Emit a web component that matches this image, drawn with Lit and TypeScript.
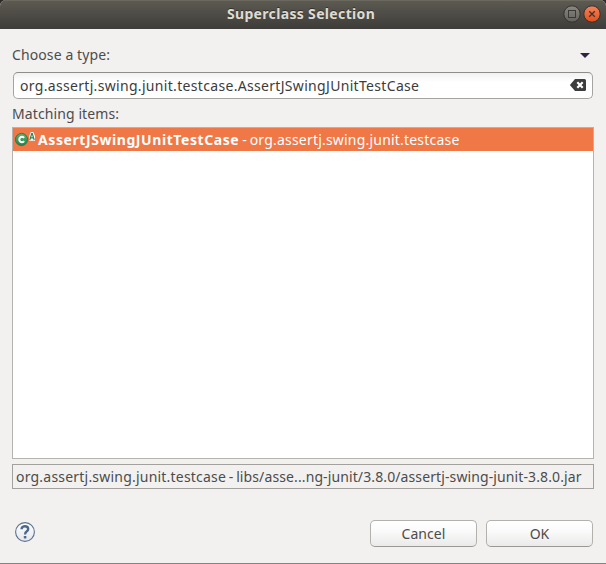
import { LitElement, html, css } from "lit";
import { customElement } from "lit/decorators.js";

const maximizeIcon = html`<svg width="18" height="18" viewBox="0 0 18 18">
  <defs><linearGradient id="g" x2="0" y2="1"><stop stop-color="#8a887f" /><stop offset="1" stop-color="#62615b" /></linearGradient></defs>
  <circle cx="9" cy="9" r="8.2" fill="url(#g)" stroke="#33322e" stroke-width="1" />
  <rect x="5.5" y="5.5" width="7" height="7" fill="none" stroke="#3a3935" />
</svg>`;

const closeIcon = html`<svg width="18" height="18" viewBox="0 0 18 18">
  <defs><linearGradient id="c" x2="0" y2="1"><stop stop-color="#f5845c" /><stop offset="1" stop-color="#e24e1b" /></linearGradient></defs>
  <circle cx="9" cy="9" r="8.2" fill="url(#c)" stroke="#33322e" stroke-width="1" />
  <path d="M6.2 6.2l5.6 5.6M11.8 6.2l-5.6 5.6" stroke="#403328" stroke-width="1.3" />
</svg>`;

const clearIcon = html`<svg width="16" height="12" viewBox="0 0 16 12">
  <path d="M5 0H14.5Q16 0 16 1.5V10.5Q16 12 14.5 12H5L.3 6.6Q0 6 .3 5.4Z" fill="#3c3c3c" />
  <path d="M7.3 3.3L12.7 8.7M12.7 3.3L7.3 8.7" stroke="#fff" stroke-width="2.2" />
</svg>`;

const classIcon = html`<svg width="22" height="16" viewBox="0 0 22 16">
  <defs><linearGradient id="k" x2="0" y2="1"><stop stop-color="#5fb070" /><stop offset="1" stop-color="#23824a" /></linearGradient></defs>
  <circle cx="7.5" cy="8.5" r="6.1" fill="url(#k)" stroke="#2d7a45" />
  <path d="M10.100 6.800A2.700 2.700 0 1 0 10.100 10.200" fill="none" stroke="#fff" stroke-width="2" />
  <path d="M15.200 9.700V5L16.800 1H19.200L21 5V9.700Z" fill="#fff" />
  <path d="M15.800 9L17.700 2.500H18.300L20.200 9M16.500 6.900H19.500" fill="none" stroke="#2f8552" stroke-width="1.200" />
</svg>`;

const helpIcon = html`<svg width="20" height="20" viewBox="0 0 20 20">
  <defs><linearGradient id="h" x2="0" y2="1"><stop stop-color="#fff" /><stop offset="1" stop-color="#e4e6ea" /></linearGradient></defs>
  <circle cx="10" cy="10" r="9.4" fill="url(#h)" stroke="#5b7293" stroke-width="1.1" />
  <path d="M6.7 7.3V6.2Q7.5 4.2 10 4.2Q13.2 4.2 13.2 7Q13.2 8.6 11.6 9.6Q10.2 10.5 10.1 12.500" fill="none" stroke="#4f668d" stroke-width="2.400" />
  <rect x="8.800" y="14" width="2.600" height="2.400" rx=".6" fill="#4f668d" />
</svg>`;

@customElement("app-root")
export class AppRoot extends LitElement {
  static styles = css`
    :host { display: block; }
    * { box-sizing: border-box; }
    svg { display: block; flex: none; }
    .page { height: 564px; background: #2b2a27; }
    .window {
      height: 564px; display: flex; flex-direction: column; overflow: hidden;
      border-radius: 6px 6px 0 0; background: #f2f1f0; color: #4c4c4c;
      border-bottom: 1px solid #838280;
      font: 14px/19px "Noto Sans", sans-serif; white-space: pre;
    }
    .titlebar {
      height: 29px; flex: none; display: grid; grid-template-columns: 1fr auto 1fr;
      align-items: center; padding: 0 5px 1px 0;
      background: linear-gradient(#5d5b52, #3d3c38); box-shadow: inset 0 1px #6b695f;
    }
    .title {
      grid-column: 2; padding: 0 0 2px 1px; font-weight: 700; letter-spacing: .34px; color: #dfdbd2;
      text-shadow: 0 -1px #33322e;
    }
    .controls { display: flex; justify-content: flex-end; gap: 2px; }
    .body { flex: 1; display: flex; flex-direction: column; padding: 16px 12px 0; }
    .type-row { display: flex; justify-content: space-between; height: 27px; letter-spacing: .1px; }
    .drop { width: 10px; height: 5px; margin: 8px 4px 0 0; background: #2e2440; clip-path: polygon(0 0, 100% 0, 50% 100%); }
    .field {
      height: 27px; margin: 0 1px; padding: 0 6px 1px; display: flex; align-items: center;
      justify-content: space-between; color: #3c3c3c; letter-spacing: .32px;
      border: 1px solid #a5a4a2; border-top-color: #8e8d8b; border-radius: 5px;
      background: linear-gradient(#f1f1f1, #fff 9px);
    }
    .matching { margin-top: 5px; height: 23px; letter-spacing: .1px; }
    .list { height: 332px; border: 1px solid #b6b3ae; background: #fff; }
    .item { height: 23px; display: flex; align-items: center; background: #f07746; color: #fff; padding: 0 0 0 1px; }
    .item svg { margin-top: -2px; margin-right: 2px; }
    .item b { letter-spacing: .58px; }
    .item span { letter-spacing: .2px; word-spacing: -1px; }
    .path { height: 25px; margin-top: 5px; padding: 2px 3px; border: 1px solid #a3a19e; letter-spacing: .11px; }
    .path .package { letter-spacing: .21px; word-spacing: -1.2px; }
    .footer { display: flex; gap: 9px; margin: 31px 1px 0 3px; align-items: flex-start; }
    .help { margin: 2px auto 0 0; }
    button {
      width: 107px; height: 27px; padding: 0; font: inherit; color: #4c4c4c; letter-spacing: .05px;
      border: 1px solid #b3b1ae; border-bottom-color: #9a9896; border-radius: 5px;
      background: linear-gradient(#fff, #fafafa 40%, #ebeae9);
    }
  `;

  render() {
    return html`<div class="page"><div class="window">
      <div class="titlebar"><div class="title">Superclass Selection</div><div class="controls">${maximizeIcon}${closeIcon}</div></div>
      <div class="body">
        <div class="type-row"><span>Choose a type:</span><div class="drop"></div></div>
        <div class="field"><span>org.assertj.swing.junit.testcase.AssertJSwingJUnitTestCase</span>${clearIcon}</div>
        <div class="matching">Matching items:</div>
        <div class="list"><div class="item">${classIcon}<b>AssertJSwingJUnitTestCase</b><span> - org.assertj.swing.junit.testcase</span></div></div>
        <div class="path"><span class="package">org.assertj.swing.junit.testcase - </span>libs/asse...ng-junit/3.8.0/assertj-swing-junit-3.8.0.jar</div>
        <div class="footer"><div class="help">${helpIcon}</div><button>Cancel</button><button>OK</button></div>
      </div>
    </div></div>`;
  }
}
